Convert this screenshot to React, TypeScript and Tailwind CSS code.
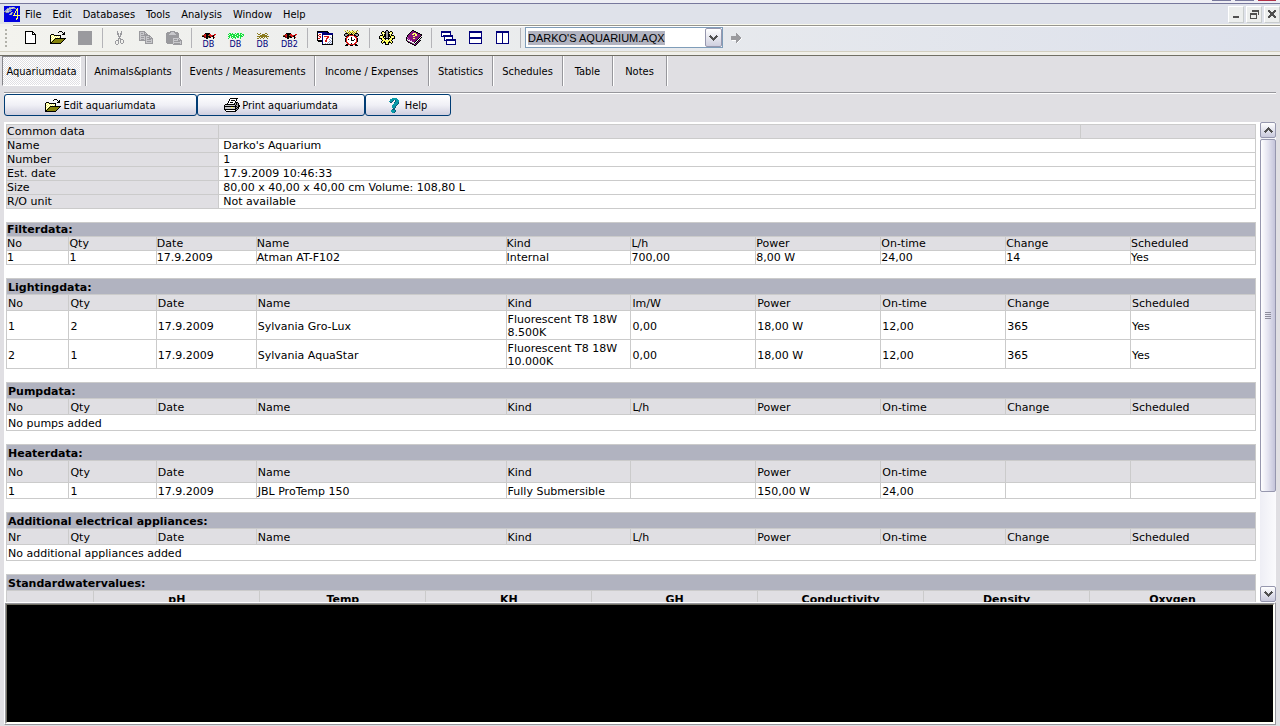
import React, { useState } from 'react';

const palette: Record<string, string> = {
  K: '#000000',
  W: '#ffffff',
  Y: '#ffff66',
  O: '#84820a',
  G: '#9a9a9e',
  L: '#c8c8cc',
  N: '#00007b',
  R: '#d81818',
  D: '#7a1010',
  E: '#14e03c',
  B: '#8a7a1c',
  P: '#84107b',
  M: '#c060c0',
  T: '#0a9aa8',
  C: '#0a5a78',
  U: '#0000e0',
  S: '#8a98c8',
  F: '#505050',
};

const art = {
  page: [
    'KKKKKKKK...',
    'KWWWWWWKK..',
    'KWWWWWWKWK.',
    'KWWWWWWKKKK',
    'KWWWWWWWWWK',
    'KWWWWWWWWWK',
    'KWWWWWWWWWK',
    'KWWWWWWWWWK',
    'KWWWWWWWWWK',
    'KWWWWWWWWWK',
    'KWWWWWWWWWK',
    'KWWWWWWWWWK',
    'KKKKKKKKKKK',
  ],
  folder: [
    '.........KKK....',
    '........K...K.K.',
    '.............KK.',
    '.KKK........KKK.',
    'KYWYKKKKKKK.....',
    'KWYWYWYWYWK.....',
    'KYWYWYWYWYK.....',
    'KWYWYKKKKKKKKKKK',
    'KYWYKOOOOOOOOOK.',
    'KWYKOOOOOOOOOK..',
    'KYKOOOOOOOOOK...',
    'KKOOOOOOOOOK....',
    'KKKKKKKKKKK.....',
  ],
  scissors: [
    '..G...G..',
    '..G...G..',
    '..GG.GG..',
    '..GG.GG..',
    '...G.G...',
    '...GGG...',
    '....G....',
    '...GGG...',
    '...G.GGG.',
    '.GGG.G..G',
    'G..G.G..G',
    'G..G.G..G',
    'G..G..GG.',
    '.GG......',
  ],
  copy: [
    'GGGGGG.........',
    'GLLLLGG........',
    'GLGGLGLG.......',
    'GLLLLGGGG......',
    'GLGGGGGGGGG....',
    'GLLLLLGLLLGG...',
    'GLGGGLGLGGGLG..',
    'GLLLLLGLLLGGGG.',
    'GLGGGLGLGGGGLG.',
    'GGGGGGGLLLLLLG.',
    '......GLGGGGLG.',
    '......GLLLLLLG.',
    '......GGGGGGGG.',
  ],
  paste: [
    '....GGGGG.......',
    '.GGGGLLLGGGG....',
    'GGGGLLLLLGGGG...',
    'GGGLLLLLLLGGG...',
    'GGGGGGGGGGGGG...',
    'GGGGGGGGGGGGG...',
    'GGGGGGGGGGGGG...',
    'GGGGGGGLLLLLLG..',
    'GGGGGGGLGGGLGLG.',
    'GGGGGGGLLLLLGGGG',
    'GGGGGGGLGGGGGGLG',
    'GGGGGGGLLLLLLLLG',
    '.GGGGGGLGGGGGGLG',
    '.......GGGGGGGGG',
  ],
  fish: [
    '...KKKKK......',
    '..DRKKKRR...RR',
    'BDRRKKBRRRRKR.',
    'KKDRKKKKRRKK..',
    '..DDKKBKK..KR.',
    '....KK.....K..',
  ],
  plant: [
    '.EE.E..E.EE.EE..',
    'E.EEEEE.EEE.E.EE',
    '.EEE.EEEE.EEEE.E',
    'EE.EEEE.EEE.EEE.',
    '.E.E.EEE.EE.E...',
    'E...E..E....E...',
  ],
  shrimp: [
    'B..B....BB..',
    '.BB..BBB..B.',
    '...BBBBBBB..',
    'BBBBBBBBBBBB',
    '..B.BB.B.B..',
    'BB.B..B...B.',
  ],
  calendar: [
    'KKKKKKKKKKK.....',
    'KNNNNNNNNNKK....',
    'KWWWWNNNNNNNNNNN',
    'KWRRWNNNNNNNNNNN',
    'KRWWWNWWWWWWWWWK',
    'KWRRWNWRRRRRWWWK',
    'KWWRWNWWWWRRWSWK',
    'KRRWWNWWWRRWWWSK',
    'KWWWWNWWWRWWSWWK',
    'KKKKKNWWRRWWWSWK',
    '.KKKKNWWRRWWSWSK',
    '.....NWWWWWSWSWK',
    '.....NWWSWSWSWSK',
    '.....KKKKKKKKKKK',
  ],
  clock: [
    'Y..B.Y..B.Y..B..',
    '.B.Y.BYYYB.YB.Y.',
    '..BYBYBYBYBYB...',
    '.KKKYBYKYBYKKK..',
    'KGGGKBKKKYKGGGK.',
    'KGGKKRRRRRKKGGK.',
    '.KKRRWWWWWRRKK..',
    '..RRWWWKWWWRR...',
    '.KRWWWWKWWWWRK..',
    '.KRWKWWKWWKWRK..',
    '.KRWWWWKKKWWRK..',
    '.KRWWWWWWWWWRK..',
    '..RRWWWWWWWRR...',
    '...RRWWKWWRR....',
    '..KKRRRRRRRKK...',
    '.KKK..KKK..KKK..',
  ],
  gear: [
    '.......KK.......',
    '...KK.KGGK.KK...',
    '..KYYKKGGKKYYK..',
    '..KYWYKGGKYWYK..',
    '...KYKKGGKKYK...',
    '.KKKYKKGGKKYKKK.',
    'KYYYKKKGGKKKYYYK',
    'KYWYK.KGGK.KYWYK',
    'KKKYYKKKKKKYYKKK',
    '..KYYYK..KYYYK..',
    '...KYYYYYYYYK...',
    '..KYYKYYYYKYYK..',
    '..KYKKKYYKKKYK..',
    '...K..KYYK..K...',
    '......KKKK......',
  ],
  book: [
    '......KK........',
    '.....KPPKK......',
    '....KPPPPPKK....',
    '...KPPPYYYPPKK..',
    '..KPPPYYPYYPPPKK',
    '.KPPPPPPPYYPPPPK',
    '.KPPPPPYYPPPPPK.',
    'KMPPPPPPPPPPPKWK',
    'KPMPPPPYYPPPKWK.',
    'KWPMPPPPPPPKWK..',
    'KGWWPMPPPPKWKPK.',
    '.KPGWWPPPKWKPK..',
    '..KKPGWWKWKPK...',
    '....KKPGWKPK....',
    '......KKPPK.....',
    '........KK......',
  ],
  cascade: [
    'NNNNNNNNNN.....',
    'NNNNNNNNNN.....',
    'NWWWWWWWWN.....',
    'NWWWWWWWWN.....',
    'NWNNNNNNNNNN...',
    'NNNNNNNNNNNN...',
    '...NWWWWWWWN...',
    '...NWWWWWWWN...',
    '...NWNNNNNNNNNN',
    '...NNNNNNNNNNNN',
    '.....NWWWWWWWWN',
    '.....NWWWWWWWWN',
    '.....NWWWWWWWWN',
    '.....NNNNNNNNNN',
  ],
  tileRows: [
    'NNNNNNNNNNNNN',
    'NNNNNNNNNNNNN',
    'NWWWWWWWWWWWN',
    'NWWWWWWWWWWWN',
    'NWWWWWWWWWWWN',
    'NWWWWWWWWWWWN',
    'NNNNNNNNNNNNN',
    'NNNNNNNNNNNNN',
    'NWWWWWWWWWWWN',
    'NWWWWWWWWWWWN',
    'NWWWWWWWWWWWN',
    'NWWWWWWWWWWWN',
    'NNNNNNNNNNNNN',
  ],
  tileCols: [
    'NNNNNNNNNNNNN',
    'NNNNNNNNNNNNN',
    'NWWWWWNWWWWWN',
    'NWWWWWNWWWWWN',
    'NWWWWWNWWWWWN',
    'NWWWWWNWWWWWN',
    'NWWWWWNWWWWWN',
    'NWWWWWNWWWWWN',
    'NWWWWWNWWWWWN',
    'NWWWWWNWWWWWN',
    'NWWWWWNWWWWWN',
    'NWWWWWNWWWWWN',
    'NNNNNNNNNNNNN',
  ],
  arrow: [
    '.....G.....',
    '.....GG....',
    '.....GGG...',
    'GGGGGGGGG..',
    'GGGGGGGGGG.',
    'GGGGGGGGGGW',
    'GGGGGGGGGW.',
    '.WWWWGGGW..',
    '.....GGW...',
    '.....GW....',
  ],
  printer: [
    '......KKKKKKKK..',
    '.....KWWWWWWK...',
    '.....KWKKKKWK...',
    '....KWWWWWWK....',
    '....KWKKKWWKKK..',
    '...KWWWWWWKGKGK.',
    '.KKKKKKKKKKGKGK.',
    'KLLLLLLLLLLKGGKK',
    'KKKKKKKKKKKKKGKK',
    'KLLLLLLYYLLKGKK.',
    'KLLLLLLLLLLKKGK.',
    'KKKKKKKKKKKKGK..',
    '.KWWWWWWWWWKK...',
    '..KKKKKKKKKK....',
  ],
  question: [
    '...TTTTT..',
    '.TTTTTTTT.',
    '.TTTC.CTTT',
    'TTTC..CTTT',
    '.CC..CTTTC',
    '.....TTTTC',
    '....TTTTC.',
    '...TTTTC..',
    '...TTTC...',
    '...TTTC...',
    '....CC....',
    '...CCC....',
    '..TTTTC...',
    '..TTTTC...',
    '...TTC....',
  ],
  app: [
    'UUUUUUUUUUUUUUUU',
    'UUUUUSSSLLSUUUUU',
    'UUUSSLLLLSSSUYUU',
    'UUSLLSSUUUUUYYUU',
    'USSLSSSSUUUUYYUU',
    'SSLLLSSUUUUYUYUU',
    'UFSSSUUSSUUYUYUU',
    'UUUUUUSLFUYUUYUU',
    'UUUUUSLSUUYUUYUU',
    'UUUUUUUUUYYYYYYY',
    'UUUUUUUUUUUUUYUU',
    'UUUUUUUUUUUUUYUU',
    'UUUUUUUUUUUUYYUU',
    'UUUUUUUUUUUUYUUU',
    'UUUUUUUUUUUUUUUU',
    'UUUUUUUUUUUUUUUU',
  ],
  chevron: [
    '.F.....F.',
    'FFF...FFF',
    '.FFF.FFF.',
    '..FFFFF..',
    '...FFF...',
    '....F....',
  ],
  minimize: ['.......', '.......', '.......', '.......', '.......', 'FFFFFF.', 'FFFFFF.'],
  restore: [
    '..FFFFFFF',
    '..FFFFFFF',
    '........F',
    'FFFFFFF.F',
    'FFFFFFF.F',
    'F.....F..',
    'F.....F..',
    'F.....F..',
    'FFFFFFF..',
  ],
  close: [
    'FF....FF',
    'FFF..FFF',
    '.FFFFFF.',
    '..FFFF..',
    '..FFFF..',
    '.FFFFFF.',
    'FFF..FFF',
    'FF....FF',
  ],
};

type SpriteName = keyof typeof art;

const Sprite: React.FC<{ name: SpriteName; className?: string }> = ({ name, className }) => {
  const rows = art[name];
  const w = rows[0].length;
  return (
    <svg
      width={w}
      height={rows.length}
      viewBox={`0 0 ${w} ${rows.length}`}
      shapeRendering="crispEdges"
      aria-hidden="true"
      className={`shrink-0 ${className ?? ''}`}
    >
      {rows.map((row, y) =>
        row.split('').map((c, x) =>
          palette[c] ? <rect key={`${x}-${y}`} x={x} y={y} width={1} height={1} fill={palette[c]} /> : null
        )
      )}
    </svg>
  );
};

const ToolButton: React.FC<{ label: string; children: React.ReactNode }> = ({ label, children }) => (
  <button type="button" aria-label={label} className="flex h-[22px] w-[27px] shrink-0 items-center justify-center">
    {children}
  </button>
);

const DbButton: React.FC<{ label: string; icon: SpriteName; text: string }> = ({ label, icon, text }) => (
  <button type="button" aria-label={label} className="flex h-[22px] w-[27px] shrink-0 flex-col items-center justify-end">
    <Sprite name={icon} />
    <span className="text-[9px] leading-[10px] text-[#00007b]">{text}</span>
  </button>
);

const Separator = () => (
  <div className="flex h-5 w-2 shrink-0 justify-center">
    <span className="ml-px w-px bg-[#b4b4b8]" />
  </div>
);

const menus = ['File', 'Edit', 'Databases', 'Tools', 'Analysis', 'Window', 'Help'];

const tabs = [
  { label: 'Animals&plants', width: 'w-[95px]' },
  { label: 'Events / Measurements', width: 'w-[134px]' },
  { label: 'Income / Expenses', width: 'w-[114px]' },
  { label: 'Statistics', width: 'w-16' },
  { label: 'Schedules', width: 'w-[70px]' },
  { label: 'Table', width: 'w-[50px]' },
  { label: 'Notes', width: 'w-[54px]' },
];

const commonData = [
  ['Name', "Darko's Aquarium"],
  ['Number', '1'],
  ['Est. date', '17.9.2009 10:46:33'],
  ['Size', '80,00 x 40,00 x 40,00 cm Volume: 108,80 L'],
  ['R/O unit', 'Not available'],
];

const waterColumns = ['pH', 'Temp', 'KH', 'GH', 'Conductivity', 'Density', 'Oxygen'];

const tableClass = 'mb-[13px] w-full table-fixed border-separate border-spacing-0 border-t border-l border-[#cbcbcb]';
const compactCell = 'border-r border-b border-[#cbcbcb] p-0 pt-px text-left leading-[12px]';
const roomyCell = 'border-r border-b border-[#cbcbcb] p-0 pt-[2px] pl-px text-left leading-[13px]';

interface DeviceTableProps {
  title: string;
  columns: string[];
  rows?: string[][];
  empty?: string;
  compact?: boolean;
  headHeight?: string;
  rowHeight?: string;
}

const DeviceTable: React.FC<DeviceTableProps> = ({
  title,
  columns,
  rows = [],
  empty,
  compact = false,
  headHeight = 'h-4',
  rowHeight = 'h-4',
}) => {
  const cell = compact ? compactCell : roomyCell;
  return (
    <table className={tableClass}>
      <colgroup>
        <col className="w-[5%]" />
        <col className="w-[7%]" />
        <col className="w-[8%]" />
        <col className="w-[20%]" />
        <col span={6} className="w-[10%]" />
      </colgroup>
      <thead>
        <tr className={`bg-[#b1b3c0] ${compact ? 'h-[14px]' : 'h-4'}`}>
          <th colSpan={10} className={`${cell} font-bold`}>
            {title}
          </th>
        </tr>
        <tr className={`bg-[#e0dfe3] ${headHeight}`}>
          {columns.map((c, i) => (
            <th key={i} className={`${cell} font-normal`}>
              {c}
            </th>
          ))}
        </tr>
      </thead>
      <tbody>
        {rows.map((row, i) => (
          <tr key={i} className={rowHeight}>
            {row.map((v, j) => (
              <td key={j} className={cell}>
                {v}
              </td>
            ))}
          </tr>
        ))}
        {empty && (
          <tr className="h-4">
            <td colSpan={10} className={cell}>
              {empty}
            </td>
          </tr>
        )}
      </tbody>
    </table>
  );
};

const flowColumns = ['No', 'Qty', 'Date', 'Name', 'Kind', 'L/h', 'Power', 'On-time', 'Change', 'Scheduled'];

const Report = () => (
  <div className="min-w-0 flex-1 overflow-hidden border-t-2 border-l-2 border-white bg-white pr-1 font-['DejaVu_Sans',sans-serif] text-[11px]">
    <table className={tableClass}>
      <colgroup>
        <col className="w-[17%]" />
        <col className="w-[69%]" />
        <col className="w-[14%]" />
      </colgroup>
      <thead>
        <tr className="h-[14px] bg-[#e0dfe3]">
          <th className={`${compactCell} font-normal`}>Common data</th>
          <th className={compactCell} />
          <th className={compactCell} />
        </tr>
      </thead>
      <tbody>
        {commonData.map(([label, value]) => (
          <tr key={label} className="h-[14px]">
            <th className={`${compactCell} bg-[#e0dfe3] font-normal`}>{label}</th>
            <td colSpan={2} className={compactCell}>
              <div className="pl-1">{value}</div>
            </td>
          </tr>
        ))}
      </tbody>
    </table>

    <DeviceTable
      title="Filterdata:"
      columns={flowColumns}
      compact
      headHeight="h-[14px]"
      rowHeight="h-[14px]"
      rows={[['1', '1', '17.9.2009', 'Atman AT-F102', 'Internal', '700,00', '8,00 W', '24,00', '14', 'Yes']]}
    />
    <DeviceTable
      title="Lightingdata:"
      columns={['No', 'Qty', 'Date', 'Name', 'Kind', 'lm/W', 'Power', 'On-time', 'Change', 'Scheduled']}
      rowHeight="h-[29px]"
      rows={[
        ['1', '2', '17.9.2009', 'Sylvania Gro-Lux', 'Fluorescent T8 18W 8.500K', '0,00', '18,00 W', '12,00', '365', 'Yes'],
        ['2', '1', '17.9.2009', 'Sylvania AquaStar', 'Fluorescent T8 18W 10.000K', '0,00', '18,00 W', '12,00', '365', 'Yes'],
      ]}
    />
    <DeviceTable title="Pumpdata:" columns={flowColumns} empty="No pumps added" />
    <DeviceTable
      title="Heaterdata:"
      columns={['No', 'Qty', 'Date', 'Name', 'Kind', '', 'Power', 'On-time', '', '']}
      headHeight="h-[22px]"
      rows={[['1', '1', '17.9.2009', 'JBL ProTemp 150', 'Fully Submersible', '', '150,00 W', '24,00', '', '']]}
    />
    <DeviceTable
      title="Additional electrical appliances:"
      columns={['Nr', ...flowColumns.slice(1)]}
      empty="No additional appliances added"
    />

    <table className={tableClass}>
      <colgroup>
        <col className="w-[7%]" />
        <col span={7} />
      </colgroup>
      <thead>
        <tr className="h-4 bg-[#b1b3c0]">
          <th colSpan={8} className={`${roomyCell} font-bold`}>
            Standardwatervalues:
          </th>
        </tr>
        <tr className="h-4 bg-[#e0dfe3]">
          <th className={roomyCell} />
          {waterColumns.map((c) => (
            <th
              key={c}
              className="border-r border-b border-[#cbcbcb] p-0 pt-[2px] text-center leading-[13px] font-bold"
            >
              {c}
            </th>
          ))}
        </tr>
      </thead>
    </table>
  </div>
);

const scrollButton =
  'flex h-4 w-full shrink-0 items-center justify-center rounded-xs border border-[#9697ae] bg-linear-to-b from-white to-[#c9c9dc]';

const ScrollBar = () => (
  <div className="flex w-4 shrink-0 flex-col bg-linear-to-r from-[#eeeef5] to-[#fbfbfd]">
    <button type="button" aria-label="Scroll up" className={scrollButton}>
      <Sprite name="chevron" className="rotate-180" />
    </button>
    <div className="min-h-0 flex-1 pt-px">
      <div className="flex h-[79%] flex-col items-center justify-center gap-px rounded-xs border border-[#9697ae] bg-linear-to-r from-white via-[#e4e4f0] to-[#c4c4da]">
        <span className="h-px w-1.5 bg-[#8e8e9c]" />
        <span className="h-px w-1.5 bg-[#8e8e9c]" />
        <span className="h-px w-1.5 bg-[#8e8e9c]" />
        <span className="h-px w-1.5 bg-[#8e8e9c]" />
      </div>
    </div>
    <button type="button" aria-label="Scroll down" className={scrollButton}>
      <Sprite name="chevron" />
    </button>
  </div>
);

const actionButton =
  'flex h-[22px] items-center justify-center gap-[2px] rounded-[3px] border border-[#003c74] bg-linear-to-b from-white via-[#f0f0f6] to-[#cfcfdf]';

const windowButton =
  'flex h-[17px] w-4 items-center justify-center border border-t-white border-l-white border-r-[#c8cccc] border-b-[#c8cccc] bg-[#eceeed]';

const App: React.FC = () => {
  const [active, setActive] = useState('Aquariumdata');

  return (
    <div className="flex h-screen flex-col overflow-hidden bg-[#e0dfe3] font-['DejaVu_Sans_Condensed','DejaVu_Sans',sans-serif] text-[11px] leading-[14px] text-black">
      {/* bottom edge of the title bar */}
      <div className="flex h-1 shrink-0 items-start justify-end gap-1 border-b border-[#77789c] bg-[#eeeef4] pr-1">
        <span className="h-px w-[19px] bg-[#77789c]" />
        <span className="h-px w-[19px] bg-[#77789c]" />
        <span className="h-px w-[18px] bg-[#b03048]" />
      </div>

      <div className="flex h-5 shrink-0 items-center bg-[#dfe2ea] pl-1">
        <Sprite name="app" />
        <nav className="flex flex-1 pt-px">
          {menus.map((m) => (
            <button key={m} type="button" className="pr-[6px] pl-[5px]">
              {m}
            </button>
          ))}
        </nav>
        <div className="flex gap-[2px]">
          <button type="button" aria-label="Minimize" className={windowButton}>
            <Sprite name="minimize" />
          </button>
          <button type="button" aria-label="Restore" className={windowButton}>
            <Sprite name="restore" />
          </button>
          <button type="button" aria-label="Close" className={windowButton}>
            <Sprite name="close" />
          </button>
        </div>
      </div>

      <div className="shrink-0 border-b border-[#716f64] bg-[#f1f0ea] pb-[3px]">
        <div className="ml-[13px] h-[3px] border-b border-white bg-linear-to-b from-[#f8f8ec] from-33% to-[#96958e] to-34%" />
        <div className="flex h-[25px] items-center border-b border-[#d3cfc0] bg-linear-to-r from-[#f3f3ee] to-[#dde1ec] pb-[3px]">
          <div className="flex w-[17px] shrink-0 flex-col gap-[2px] pl-[5px]">
            <span className="size-[2px] bg-[#b2b2aa]" />
            <span className="size-[2px] bg-[#b2b2aa]" />
            <span className="size-[2px] bg-[#b2b2aa]" />
            <span className="size-[2px] bg-[#b2b2aa]" />
            <span className="size-[2px] bg-[#b2b2aa]" />
          </div>
          <ToolButton label="New"><Sprite name="page" /></ToolButton>
          <ToolButton label="Open"><Sprite name="folder" /></ToolButton>
          <ToolButton label="Save"><span className="size-[14px] bg-[#9a9a9e]" /></ToolButton>
          <Separator />
          <ToolButton label="Cut"><Sprite name="scissors" /></ToolButton>
          <ToolButton label="Copy"><Sprite name="copy" /></ToolButton>
          <ToolButton label="Paste"><Sprite name="paste" /></ToolButton>
          <Separator />
          <DbButton label="Fish database" icon="fish" text="DB" />
          <DbButton label="Plant database" icon="plant" text="DB" />
          <DbButton label="Invertebrate database" icon="shrimp" text="DB" />
          <DbButton label="Second fish database" icon="fish" text="DB2" />
          <Separator />
          <ToolButton label="Calendar"><Sprite name="calendar" /></ToolButton>
          <ToolButton label="Reminders"><Sprite name="clock" /></ToolButton>
          <Separator />
          <ToolButton label="Settings"><Sprite name="gear" /></ToolButton>
          <ToolButton label="Manual"><Sprite name="book" /></ToolButton>
          <Separator />
          <ToolButton label="Cascade"><Sprite name="cascade" /></ToolButton>
          <ToolButton label="Tile horizontally"><Sprite name="tileRows" /></ToolButton>
          <ToolButton label="Tile vertically"><Sprite name="tileCols" /></ToolButton>
          <Separator />
          <div className="ml-px flex h-[21px] w-[198px] items-center justify-between border border-[#7f9db9] bg-white pl-[2px]">
            <select
              aria-label="Aquarium file"
              className="field-sizing-content h-[14px] appearance-none bg-[#b1b3c0] font-['Liberation_Sans',sans-serif] text-[11px] leading-[14px]"
            >
              <option>DARKO'S AQUARIUM.AQX</option>
            </select>
            <button
              type="button"
              aria-label="Open file list"
              className="flex h-[19px] w-[17px] items-center justify-center rounded-xs border border-[#9697ae] bg-linear-to-b from-white to-[#cfcfdf]"
            >
              <Sprite name="chevron" />
            </button>
          </div>
          <ToolButton label="Go"><Sprite name="arrow" /></ToolButton>
        </div>
      </div>

      <div className="flex h-[30px] shrink-0 pl-[2px]">
        <button
          type="button"
          onClick={() => setActive('Aquariumdata')}
          className="mr-1 w-[79px] border border-t-[#85858a] border-l-[#85858a] border-r-white border-b-white bg-[repeating-conic-gradient(#ffffff_0_25%,#e0dfe3_0_50%)] bg-size-[2px_2px] pt-[2px] whitespace-nowrap"
        >
          Aquariumdata
        </button>
        {tabs.map((t) => (
          <button
            key={t.label}
            type="button"
            aria-pressed={active === t.label}
            onClick={() => setActive(t.label)}
            className={`${t.width} shrink-0 border-l border-[#97979c] pt-[2px] whitespace-nowrap shadow-[inset_1px_0_#ffffff]`}
          >
            {t.label}
          </button>
        ))}
        <span className="w-[2px] border-l border-[#97979c] bg-white" />
      </div>

      <div className="mx-1 mt-[6px] h-[2px] shrink-0 border-t border-[#97979c] bg-white" />

      <div className="flex shrink-0 pl-1">
        <button type="button" className={`${actionButton} w-[193px]`}>
          <Sprite name="folder" />
          <span className="pt-px">Edit aquariumdata</span>
        </button>
        <button type="button" className={`${actionButton} w-[168px]`}>
          <Sprite name="printer" />
          <span className="pt-px">Print aquariumdata</span>
        </button>
        <button type="button" className={`${actionButton} w-[86px]`}>
          <Sprite name="question" />
          <span className="pt-px pl-1">Help</span>
        </button>
      </div>

      <main className="mt-[6px] flex min-h-0 flex-1 pr-1 pl-1">
        <Report />
        <ScrollBar />
      </main>

      <div className="mx-1 mb-px h-[123px] shrink-0 border border-t-white border-l-white border-r-[#97979c] border-b-[#97979c]">
        <div className="h-full border border-t-[#97979c] border-l-[#97979c] border-r-white border-b-white">
          <div className="h-full border border-t-[#716f64] border-l-[#716f64] border-r-[#fffff0] border-b-[#fffff0] bg-black" />
        </div>
      </div>
    </div>
  );
};

export default App;
